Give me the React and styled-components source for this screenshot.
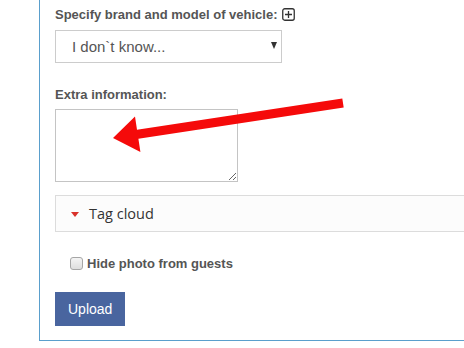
import styled, { createGlobalStyle } from 'styled-components'

const GlobalStyle = createGlobalStyle`
  html, body {
    margin: 0;
    padding: 0;
    background: #fff;
    overflow: hidden;
  }
  body {
    font-family: "Liberation Sans", Arial, sans-serif;
  }
`

const Page = styled.div`
  position: relative;
  width: 464px;
  height: 348px;
  overflow: hidden;
`

const Form = styled.div`
  margin-left: 39px;
  width: 520px;
  border-left: 1px solid #5a9fcc;
  border-bottom: 1px solid #5a9fcc;
  padding: 7px 0 14px 15px;
  display: flex;
  flex-direction: column;
  align-items: flex-start;
`

const Label = styled.label`
  display: flex;
  align-items: center;
  gap: 4px;
  font: bold 13px/15px "Liberation Sans", Arial, sans-serif;
  color: #555;
  margin-top: ${p => p.$top || 0}px;
`

const SelectWrap = styled.div`
  position: relative;
  margin-top: 8px;
`

const Select = styled.select`
  appearance: none;
  display: block;
  width: 227px;
  height: 33px;
  border: 1px solid #ccc;
  border-radius: 0;
  background: #fff;
  padding: 0 0 0 16px;
  font: 15px "Liberation Sans", Arial, sans-serif;
  color: #555;
  outline: none;
`

const Caret = styled.span`
  position: absolute;
  right: 5px;
  top: 12px;
  width: 0;
  height: 0;
  border-left: 3.5px solid transparent;
  border-right: 3.5px solid transparent;
  border-top: 7px solid #333;
  pointer-events: none;
`

const TextArea = styled.textarea`
  display: block;
  box-sizing: border-box;
  width: 183px;
  height: 73px;
  margin-top: 7px;
  border: 1px solid #c4c4c4;
  border-radius: 0;
  resize: both;
  outline: none;
`

const Panel = styled.div`
  box-sizing: border-box;
  width: 100%;
  height: 37px;
  margin-top: 13px;
  border: 1px solid #dcdcdc;
  background: #fcfcfc;
  display: flex;
  align-items: center;
  gap: 10px;
  padding-left: 15px;
  font: 14.5px "Open Sans", sans-serif;
  color: #333;
`

const Toggle = styled.span`
  width: 0;
  height: 0;
  border-left: 4px solid transparent;
  border-right: 4px solid transparent;
  border-top: 5px solid #d9322b;
  margin-top: 1px;
`

const CheckRow = styled.label`
  display: flex;
  align-items: center;
  gap: 4px;
  margin-top: 24px;
  padding-left: 15px;
  font: bold 13px/15px "Liberation Sans", Arial, sans-serif;
  color: #555;
`

const Check = styled.input`
  appearance: none;
  box-sizing: border-box;
  width: 13px;
  height: 13px;
  margin: 0;
  border: 1px solid #a6a6a6;
  border-radius: 3px;
  background: linear-gradient(#f4f4f4, #dedede);
`

const Button = styled.button`
  margin-top: 21px;
  height: 34px;
  padding: 0 13px;
  border: none;
  background: #49659f;
  color: #fff;
  font: 14px "Liberation Sans", Arial, sans-serif;
  cursor: pointer;
`

const Arrow = styled.svg`
  position: absolute;
  left: 0;
  top: 0;
  pointer-events: none;
`

const PlusBox = () => (
  <svg width="13" height="13" viewBox="0 0 13 13">
    <rect x="0.75" y="0.75" width="11.5" height="11.5" rx="2" fill="none" stroke="#333" strokeWidth="1.3" />
    <path d="M6.5 3v7M3 6.5h7" stroke="#333" strokeWidth="1.3" />
  </svg>
)

const App = () => {
  return (
    <Page>
      <GlobalStyle />
      <Form>
        <Label>
          Specify brand and model of vehicle: <PlusBox />
        </Label>
        <SelectWrap>
          <Select defaultValue="none">
            <option value="none">I don`t know...</option>
          </Select>
          <Caret />
        </SelectWrap>
        <Label $top={24}>Extra information:</Label>
        <TextArea />
        <Panel>
          <Toggle />
          Tag cloud
        </Panel>
        <CheckRow>
          <Check type="checkbox" />
          Hide photo from guests
        </CheckRow>
        <Button>Upload</Button>
      </Form>
      <Arrow width="464" height="348">
        <polygon
          fill="#f50a0a"
          points="113,138 140.4,152 138.4,138.7 343.7,107.5 342.3,98.6 137,129.8 135,116.4"
        />
      </Arrow>
    </Page>
  )
}

export default App
